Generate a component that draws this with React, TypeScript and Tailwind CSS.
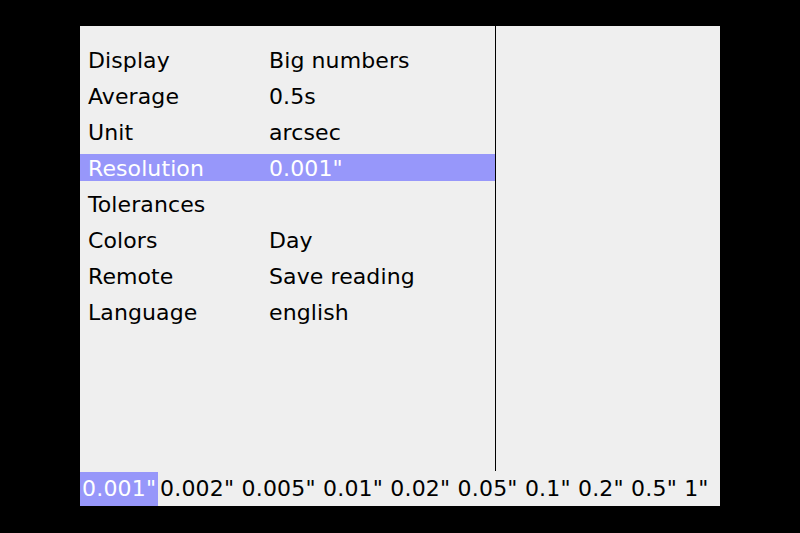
import React from "react";

const rows: [string, string][] = [
  ["Display", "Big numbers"],
  ["Average", "0.5s"],
  ["Unit", "arcsec"],
  ["Resolution", "0.001\""],
  ["Tolerances", ""],
  ["Colors", "Day"],
  ["Remote", "Save reading"],
  ["Language", "english"],
];

const options = ["0.001\"", "0.002\"", "0.005\"", "0.01\"", "0.02\"", "0.05\"", "0.1\"", "0.2\"", "0.5\"", "1\""];

export default function App() {
  const selectedRow = 3;

  return (
    <div className="w-[800px] h-[533px] bg-black flex items-start justify-center pt-[26px]">
      <div
        className="w-[640px] h-[480px] bg-[#efefef] flex flex-col text-black text-[22px]"
        style={{ fontFamily: '"DejaVu Sans", sans-serif' }}
      >
        {/* menu + right pane */}
        <div className="flex flex-1 min-h-0">
          <div className="w-[415px] pt-5 flex flex-col gap-[9px]">
            {rows.map(([label, value], i) => (
              <div
                key={label}
                className={
                  "h-[27px] flex items-center pl-[8px] pt-[2px] leading-none whitespace-pre tracking-[0.1px] " +
                  (i === selectedRow ? "bg-[#9797fa] text-white" : "")
                }
              >
                <span className="w-[181px]">{label}</span>
                <span>{value}</span>
              </div>
            ))}
          </div>
          <div className="w-px bg-black" />
          <div className="flex-1" />
        </div>

        {/* option bar */}
        <div className="h-[35px] flex items-stretch whitespace-pre leading-none tracking-[0.2px] pt-[1px]">
          <span className="w-[78px] pl-[2px] flex items-center bg-[#9797fa] text-white">
            {options[0]}
          </span>
          <span className="ml-[2px] flex items-center">{options.slice(1).join(" ")}</span>
        </div>
      </div>
    </div>
  );
}
